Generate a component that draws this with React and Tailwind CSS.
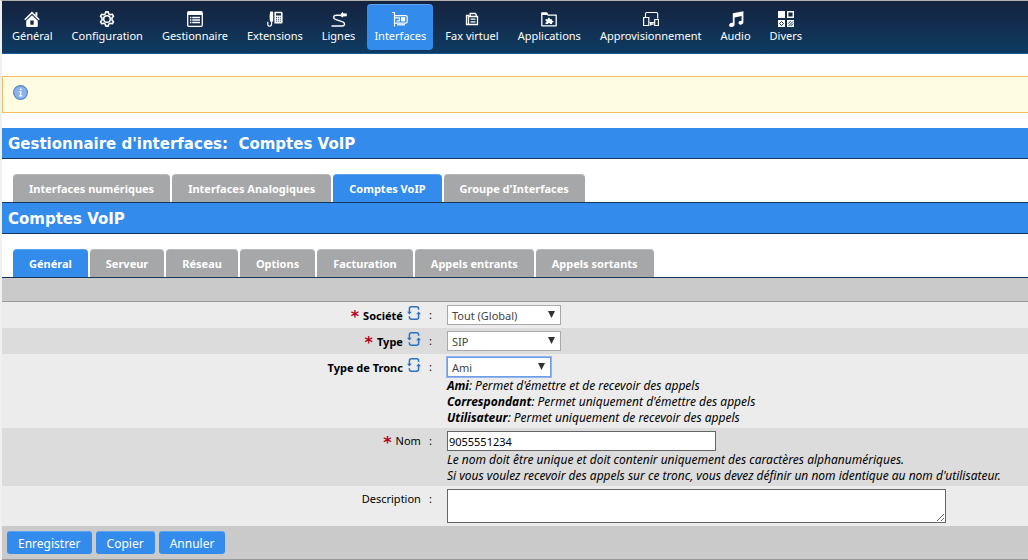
import { useState } from "react";
import clsx from "clsx";

const Icon = ({ children }) => (
    <svg
        width="16"
        height="16"
        viewBox="0 0 16 16"
        fill="none"
        stroke="currentColor"
        strokeWidth="1.3"
        aria-hidden="true"
    >
        {children}
    </svg>
);

const HomeIcon = () => (
    <Icon>
        <path d="M.8 8.8 8 1.600l7.200 7.200" strokeWidth="1.500" />
        <path d="M11.400 1.200h2v4.600l-2-2z" fill="currentColor" stroke="none" />
        <path
            d="M2.200 9.800 8 4.200l5.800 5.600V15a.9.9 0 0 1-.9.9H3.100a.9.9 0 0 1-.9-.9zM6.300 9.400v4.400h3.400V9.400z"
            fill="currentColor"
            fillRule="evenodd"
            stroke="none"
        />
    </Icon>
);

const GearIcon = () => (
    <Icon>
        <path
            d="M6.800.9h2.400l.6 2 1.400.8 2.100-.5 1.200 2.100L13 6.900v2.200l1.500 1.600-1.200 2.100-2.100-.5-1.400.8-.6 2H6.800l-.6-2-1.400-.8-2.100.5-1.200-2.100L3 9.100V6.900L1.500 5.300l1.200-2.100 2.100.5 1.400-.8z"
            strokeWidth="1.600"
            strokeLinejoin="round"
        />
        <circle cx="8" cy="8" r="3.300" strokeWidth="1.500" />
    </Icon>
);

const ManagerIcon = () => (
    <Icon>
        <rect x=".7" y=".7" width="14.600" height="14.600" rx="1.200" />
        <path d="M1 1h14v3H1z" fill="currentColor" stroke="none" />
        <path d="M3 6.500h1.400M5.200 6.500H13M3 9h1.400M5.200 9H13M3 11.500h1.400M5.200 11.500H13" />
    </Icon>
);

const ExtensionsIcon = () => (
    <Icon>
        <path d="M3.200.4h2c.6 0 1 .4 1 1v8.400c0 .6-.4 1-1 1h-2c-.8-3-.8-7.400 0-10.400z" fill="currentColor" stroke="none" />
        <path d="M4.600 10.500v2.300c0 3.200-3.800 3.200-3.800.4v-2.400" strokeWidth="1.200" />
        <path
            d="M7.400.8h7a1.200 1.200 0 0 1 1.200 1.200v9.200a1.200 1.200 0 0 1-1.200 1.200h-7zM9 2.200v2.200h5V2.200z"
            fill="currentColor"
            fillRule="evenodd"
            stroke="none"
        />
        <path
            d="M9 6.400h5M9 8.300h5M9 10.200h5"
            stroke="#14304f"
            strokeDasharray="1 .9"
            strokeWidth=".9"
        />
    </Icon>
);

const LinesIcon = () => (
    <Icon>
        <path
            d="M.5 15h10.600c3.200 0 3.200-3.200.6-4.200L4.400 8.400C1.800 7.200 2.200 4.200 5.200 4.200h5.200"
            strokeWidth="1.400"
        />
        <path d="M9.800 2.800 12 .8v1.400l3.800.3v2.700l-3.800.2v1.200L9.800 5.400z" fill="currentColor" stroke="none" />
    </Icon>
);

const InterfacesIcon = () => (
    <Icon>
        <path d="M.2 1.500h2.300v14" strokeWidth="1.200" />
        <path d="M2.800 4.600h10.900c.9 0 1.500.6 1.500 1.500v4.600c0 .9-.6 1.500-1.500 1.500H2.800" strokeWidth="1.200" />
        <path d="M3 6.900h4.500v3H4.500" strokeWidth="1.100" />
        <path d="M9 6.200h4.200v4.200H9z" fill="currentColor" stroke="none" />
        <path d="M5 13.800h8" strokeWidth="1.300" />
    </Icon>
);

const FaxIcon = () => (
    <Icon>
        <path
            d="M2.500 4.500h2v9h-2zM4.500 5.500h9v8h-9zM6.200 5.500v-3h5l1 1v2M6.500 8.200h5M6.500 10.800h5"
            strokeWidth="1.300"
        />
    </Icon>
);

const ApplicationsIcon = () => (
    <Icon>
        <path d="M.8 14.800V2h5l1.200 2.100h8.200v10.700z" strokeLinejoin="round" />
        <path d="M1 2h4.800L7 4H1z" fill="currentColor" stroke="none" />
        <path
            d="M4.500 8.300h2.400c-.7-2 2.600-2 1.900 0H11v1.500c2-.7 2 2.200 0 1.600V13H8.800c.4-1.400-1.900-1.400-1.500 0H4.500v-1.600c1.500.4 1.500-1.900 0-1.500z"
            fill="currentColor"
            stroke="none"
        />
    </Icon>
);

const ProvisioningIcon = () => (
    <Icon>
        <path d="M2.500 6V2.700c0-.8.4-1.200 1.200-1.200h9.800c.8 0 1.200.4 1.200 1.200V7.500M6.500 11.500h4.600" strokeWidth="1.100" />
        <path d="M.6 6.500h5.200v8H.6zM11.700 8.500h3.700v6h-3.700z" strokeWidth="1.200" />
        <path d="M7 13h3.600M7.800 12v2.500" />
    </Icon>
);

const AudioIcon = () => (
    <Icon>
        <path
            d="M4.800 2.200 15.400.2v10.900c0 3-4.900 3.600-4.900.9 0-1.900 1.900-2.600 3.100-2.300V5L6.600 6.400v7c0 3-5.500 3.700-5.500.9 0-2 2-2.800 3.700-2.400z"
            fill="currentColor"
            stroke="none"
        />
    </Icon>
);

const MiscIcon = () => (
    <Icon>
        <path d="M0 0h7v7H0z" fill="currentColor" stroke="none" />
        <path d="M9.700.7h5.600v5.600H9.700z" strokeWidth="1.400" />
        <path d="M0 9h7v7H0zM9 9h7v7H9z" fill="currentColor" stroke="none" />
        <path
            d="m3.500 10.500 2 2-2 2-2-2zM10 12.800l2.800-2.800M10.500 15l4.500-4.500M12.500 15.200l2.700-2.700"
            stroke="#0f3557"
            strokeWidth="1"
        />
    </Icon>
);

const SyncIcon = () => (
    <svg
        width="14"
        height="16"
        viewBox="0 0 14 16"
        fill="none"
        stroke="#2a72c4"
        strokeWidth="1.5"
        aria-hidden="true"
    >
        <path d="M2.400 8V3.800c0-1.300.7-2 2-2h5.200c1.300 0 2 .7 2 2v1M11.600 8v4.200c0 1.300-.7 2-2 2H4.400c-1.300 0-2-.7-2-2v-1" />
        <path d="M0 6.800h4.800L2.400 9.400zM9.200 9.200H14l-2.400-2.600z" fill="#2a72c4" stroke="none" />
    </svg>
);

const InfoIcon = () => (
    <svg width="15" height="15" viewBox="0 0 15 15" aria-hidden="true">
        <circle cx="7.500" cy="7.500" r="6.900" fill="#8ab4ee" stroke="#5b87c4" strokeWidth="1.200" />
        <path d="M7 3.500h1.500V5H7zM6 6.300h2.400v4.200h1v.9H6v-.9h1V7.200H6z" fill="#fff" />
    </svg>
);

const menu = [
    { label: "Général", icon: HomeIcon },
    { label: "Configuration", icon: GearIcon },
    { label: "Gestionnaire", icon: ManagerIcon },
    { label: "Extensions", icon: ExtensionsIcon },
    { label: "Lignes", icon: LinesIcon },
    { label: "Interfaces", icon: InterfacesIcon },
    { label: "Fax virtuel", icon: FaxIcon },
    { label: "Applications", icon: ApplicationsIcon },
    { label: "Approvisionnement", icon: ProvisioningIcon },
    { label: "Audio", icon: AudioIcon },
    { label: "Divers", icon: MiscIcon },
];

const sections = ["Interfaces numériques", "Interfaces Analogiques", "Comptes VoIP", "Groupe d'Interfaces"];

const pages = ["Général", "Serveur", "Réseau", "Options", "Facturation", "Appels entrants", "Appels sortants"];

function Tabs({ items, initial }) {
    const [active, setActive] = useState(initial);

    return (
        <div className="flex gap-0.5 border-b border-[#12395c] pt-[15px] pl-[11px]">
            {items.map((item) => (
                <button
                    key={item}
                    type="button"
                    onClick={() => setActive(item)}
                    className={clsx(
                        "h-7 rounded-t px-4 pt-0.5 text-[11px] font-bold whitespace-nowrap text-white inset-shadow-[0_1px_0_rgba(255,255,255,0.2)]",
                        item === active ? "bg-[#338bec]" : "bg-[#a5a7a9]"
                    )}
                >
                    {item}
                </button>
            ))}
        </div>
    );
}

function Title({ children }) {
    return (
        <h2 className="h-[31px] border-b border-[#12395c] bg-[#338bec] pl-1.5 font-['DejaVu_Sans',sans-serif] text-[15px] leading-8 font-bold whitespace-pre text-white">
            {children}
        </h2>
    );
}

function Row({ id, label, required, sync, dark, children }) {
    return (
        <div className={clsx("flex py-[3px]", dark ? "bg-[#dcdcdc]" : "bg-[#ececec]")}>
            <div className="flex h-5 w-[42%] shrink-0 items-center justify-end">
                {required && (
                    <span className="mr-1 h-5 font-['DejaVu_Sans',sans-serif] text-base leading-6 font-bold text-[#b8001c]">
                        *
                    </span>
                )}
                <label htmlFor={id} className={clsx("text-[11px] leading-5", sync && "pt-0.5 font-bold")}>
                    {label}
                </label>
                {sync && (
                    <button type="button" aria-label="Synchroniser" className="ml-1 pb-1">
                        <SyncIcon />
                    </button>
                )}
                <span className="ml-2 w-1 text-[11px]">:</span>
            </div>
            <div className="min-w-0 flex-1 pl-3.5">{children}</div>
        </div>
    );
}

function Select({ id, options, className }) {
    return (
        <div className="relative w-fit">
            <select
                id={id}
                className={clsx(
                    "block h-5 appearance-none border bg-white pt-0.5 pl-1 text-[11px] text-[#444] outline-none",
                    className
                )}
            >
                {options.map((option) => (
                    <option key={option}>{option}</option>
                ))}
            </select>
            <svg
                className="pointer-events-none absolute top-1.5 right-1.5"
                width="7"
                height="7"
                viewBox="0 0 7 7"
                aria-hidden="true"
            >
                <path d="M0 0h7L3.500 7z" fill="#333" />
            </svg>
        </div>
    );
}

function Action({ children, ...props }) {
    return (
        <button
            {...props}
            className="h-[23px] rounded-[3px] bg-[#338bec] px-[11px] pt-0.5 text-xs text-white inset-shadow-[0_1px_0_rgba(255,255,255,0.2)]"
        >
            {children}
        </button>
    );
}

export default function App() {
    const [current, setCurrent] = useState("Interfaces");

    return (
        <div className="overflow-x-hidden border-t border-l-2 border-t-[#b0b0a8] border-l-[#f0f0f0] bg-white font-['Noto_Sans',sans-serif] text-xs text-black">
            <nav className="flex h-[53px] items-start gap-[5px] border-b border-[#1a5a92] bg-linear-to-b from-[#14233f] to-[#0d3b62] pt-[3px] pl-[3px]">
                {menu.map(({ label, icon: MenuIcon }) => (
                    <button
                        key={label}
                        type="button"
                        onClick={() => setCurrent(label)}
                        className={clsx(
                            "flex h-[46px] flex-col items-center rounded px-[7px] pt-[7px] text-[11px] leading-[18px] whitespace-nowrap text-white",
                            label === current && "bg-[#338bec] inset-shadow-[0_1px_0_rgba(255,255,255,0.2)]"
                        )}
                    >
                        <MenuIcon />
                        {label}
                    </button>
                ))}
            </nav>

            <div className="mt-[22px] mb-[15px] h-[37px] border border-r-0 border-[#f3bd62] bg-[#fffde1] pt-2 pl-2.5">
                <InfoIcon />
            </div>

            <Title>{"Gestionnaire d'interfaces:  Comptes VoIP"}</Title>
            <Tabs items={sections} initial="Comptes VoIP" />
            <Title>Comptes VoIP</Title>
            <Tabs items={pages} initial="Général" />

            <form onSubmit={(e) => e.preventDefault()}>
                <div className="h-6 border-b border-[#999] bg-[#cacaca]" />

                <Row id="company" label="Société" required sync>
                    <Select id="company" options={["Tout (Global)"]} className="w-[114px] border-[#a9a9a9]" />
                </Row>
                <Row id="type" label="Type" required sync dark>
                    <Select id="type" options={["SIP"]} className="w-[114px] border-[#a9a9a9]" />
                </Row>
                <Row id="trunk" label="Type de Tronc" sync>
                    <Select
                        id="trunk"
                        options={["Ami", "Correspondant", "Utilisateur"]}
                        className="w-[104px] border-[#6e9ee8] ring-1 ring-[#8fb4ee]"
                    />
                    <div className="pt-px leading-4 italic">
                        <p>
                            <b>Ami</b>: Permet d'émettre et de recevoir des appels
                        </p>
                        <p>
                            <b>Correspondant</b>: Permet uniquement d'émettre des appels
                        </p>
                        <p className="-mb-px">
                            <b>Utilisateur</b>: Permet uniquement de recevoir des appels
                        </p>
                    </div>
                </Row>
                <Row id="name" label="Nom" required dark>
                    <input
                        id="name"
                        type="text"
                        defaultValue="9055551234"
                        className="block h-5 w-[269px] border border-[#666] bg-white px-px text-[11px] outline-none"
                    />
                    <div className="pt-px leading-4 italic">
                        <p>Le nom doit être unique et doit contenir uniquement des caractères alphanumériques.</p>
                        <p className="-mb-px">
                            Si vous voulez recevoir des appels sur ce tronc, vous devez définir un nom identique au nom
                            d'utilisateur.
                        </p>
                    </div>
                </Row>
                <Row id="description" label="Description">
                    <textarea
                        id="description"
                        className="block h-[34px] w-[499px] max-w-full border border-[#666] bg-white px-px text-[11px] outline-none"
                    />
                </Row>

                <div className="flex gap-1 border-b border-[#999] bg-[#cacaca] pt-[5px] pb-[5px] pl-[5px]">
                    <Action type="submit">Enregistrer</Action>
                    <Action type="button">Copier</Action>
                    <Action type="reset">Annuler</Action>
                </div>
            </form>
        </div>
    );
}
